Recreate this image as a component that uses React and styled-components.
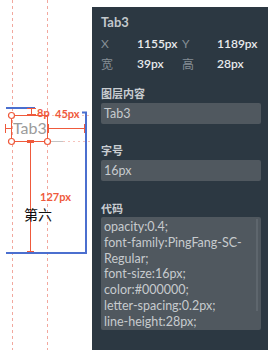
import styled, { createGlobalStyle } from "styled-components";

const GlobalStyle = createGlobalStyle`
  html, body {
    margin: 0;
    padding: 0;
    background: #ffffff;
  }
  body {
    font-family: Lato, "Noto Sans CJK SC", sans-serif;
  }
`;

const RED = "#ef5a3c";
const BLUE = "#4b6fcf";

const codeLines = [
  "opacity:0.4;",
  "font-family:PingFang-SC-",
  "Regular;",
  "font-size:16px;",
  "color:#000000;",
  "letter-spacing:0.2px;",
  "line-height:28px;",
];

// measurement overlay drawn on the artboard
const Annotations = () => (
  <svg width="92" height="350" viewBox="0 0 92 350">
    {/* guides */}
    <g stroke="#f2a89e" strokeWidth="1" strokeDasharray="3 3">
      <line x1="12.5" y1="0" x2="12.5" y2="350" />
      <line x1="47.5" y1="0" x2="47.5" y2="350" />
    </g>
    <g stroke="#f6c3bc" strokeWidth="1" strokeDasharray="2 3">
      <line x1="47" y1="115.5" x2="92" y2="115.5" />
      <line x1="63" y1="141.5" x2="92" y2="141.5" />
    </g>

    {/* parent frame */}
    <g stroke={BLUE} strokeWidth="2" fill="none">
      <line x1="6" y1="108" x2="35" y2="108" />
      <polyline points="82,112.5 86,112.5 86,253 6,253" />
    </g>

    {/* text element */}
    <line x1="11" y1="141.5" x2="63" y2="141.5" stroke="#c4c4c4" />
    <text x="13" y="134" fontFamily="Lato, sans-serif" fontSize="16" fill="#9b9b9b">
      Tab3
    </text>
    <rect x="11.5" y="115.5" width="36" height="26" fill="none" stroke={RED} />

    <g stroke={RED} strokeWidth="1" fill="none">
      {/* 8px gap */}
      <line x1="31.5" y1="108" x2="31.5" y2="115" />
      <line x1="27" y1="108.5" x2="36" y2="108.5" />
      <line x1="27" y1="114.5" x2="36" y2="114.5" />
      {/* 45px to right edge */}
      <line x1="48" y1="128.5" x2="85" y2="128.5" />
      <line x1="48.5" y1="124" x2="48.5" y2="133" />
      <line x1="84.5" y1="124" x2="84.5" y2="133" />
      {/* left inset */}
      <line x1="5.5" y1="124" x2="5.5" y2="133" />
      <line x1="5" y1="128.5" x2="11" y2="128.5" />
      {/* 127px down */}
      <line x1="30.5" y1="143" x2="30.5" y2="252" />
      <line x1="27" y1="251.5" x2="34" y2="251.5" />
    </g>
    <rect x="27" y="140" width="7" height="3" fill={RED} />

    <g stroke={RED} strokeWidth="1.2" fill="#ffffff">
      <circle cx="11.5" cy="115.5" r="3" />
      <circle cx="11.5" cy="141.5" r="3" />
      <circle cx="47.5" cy="141.5" r="3" />
    </g>

    <g fontFamily="Lato, sans-serif" fontSize="11" fontWeight="700" fill={RED}>
      <text x="37" y="117">8p</text>
      <text x="55" y="118">45px</text>
      <text x="40" y="201">127px</text>
    </g>

    <text x="24" y="220" fontFamily="'Noto Sans CJK SC', sans-serif" fontSize="14" fill="#111111">
      第六
    </text>
  </svg>
);

const App = () => (
  <>
    <GlobalStyle />
    <Page>
      <Canvas>
        <Annotations />
      </Canvas>

      <Panel>
        <Title>Tab3</Title>
        <Metrics>
          <Key>X</Key>
          <Value>1155px</Value>
          <Key>Y</Key>
          <Value>1189px</Value>
          <Key>宽</Key>
          <Value>39px</Value>
          <Key>高</Key>
          <Value>28px</Value>
        </Metrics>

        <SectionLabel $gap={12}>图层内容</SectionLabel>
        <Field>Tab3</Field>

        <SectionLabel $gap={18}>字号</SectionLabel>
        <Field>16px</Field>

        <SectionLabel $gap={19}>代码</SectionLabel>
        <CodeBox>
          <CodeText>
            {codeLines.map((line) => (
              <CodeLine key={line}>{line}</CodeLine>
            ))}
          </CodeText>
          <Scroll />
        </CodeBox>
      </Panel>
    </Page>
  </>
);

export default App;

const Page = styled.div`
  display: flex;
  width: 268px;
  height: 350px;
  overflow: hidden;
`;

const Canvas = styled.div`
  width: 92px;
  flex: none;
  height: 350px;
  background: #ffffff;

  svg {
    display: block;
  }
`;

const Panel = styled.div`
  flex: 1;
  margin-top: 7px;
  background: #2c3842;
  padding: 7px 7px 0 9px;
  display: flex;
  flex-direction: column;
`;

const Title = styled.div`
  font-size: 13px;
  font-weight: 700;
  line-height: 16px;
  color: #c3c8cc;
`;

const Metrics = styled.div`
  margin-top: 3px;
  display: grid;
  grid-template-columns: 36px 45px 35px 1fr;
  grid-auto-rows: 20px;
  align-items: center;
`;

const Key = styled.div`
  font-size: 12px;
  color: #858e95;
  font-family: Lato, "Noto Sans CJK SC", sans-serif;
`;

const Value = styled.div`
  font-size: 12px;
  font-weight: 600;
  color: #e9ebed;
  white-space: nowrap;
`;

const SectionLabel = styled.div`
  margin-top: ${(p) => p.$gap}px;
  font-size: 11px;
  font-weight: 700;
  line-height: 16px;
  color: #c9cdd1;
  font-family: "Noto Sans CJK SC", sans-serif;
`;

const Field = styled.div`
  margin-top: 2px;
  height: 21px;
  line-height: 21px;
  padding: 0 3px;
  border-radius: 2px;
  background: #50585f;
  color: #c7cbce;
  font-size: 12.5px;
`;

const CodeBox = styled.div`
  margin-top: 1px;
  height: 113px;
  padding: 2px 3px;
  box-sizing: border-box;
  border-radius: 2px;
  background: #50585f;
  display: flex;
  gap: 2px;
`;

const CodeText = styled.div`
  flex: 1;
  min-width: 0;
`;

const CodeLine = styled.div`
  font-size: 12.5px;
  line-height: 15.8px;
  color: #c7cbce;
  white-space: nowrap;
`;

const Scroll = styled.div`
  flex: none;
  align-self: flex-start;
  width: 2px;
  height: 92px;
  background: #5e666d;
`;
